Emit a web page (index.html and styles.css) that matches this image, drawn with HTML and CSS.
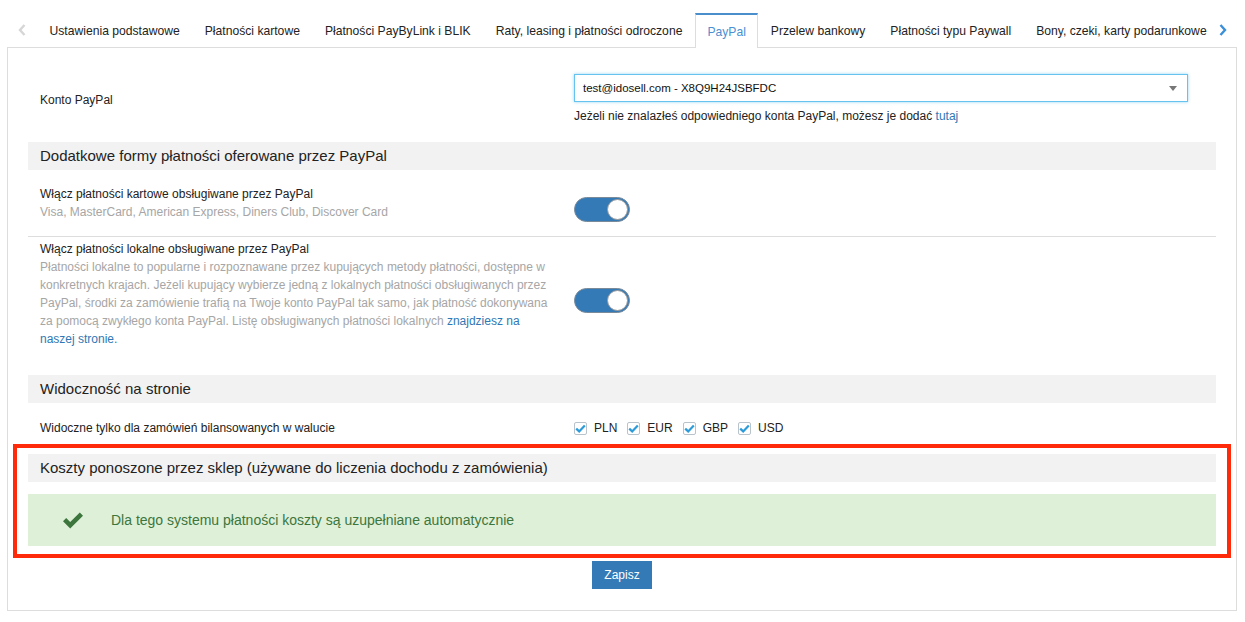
FILE: index.html
```html
<!DOCTYPE html>
<html lang="pl">
<head>
    <meta charset="UTF-8">
    <title>Płatności - PayPal</title>
    <link rel="stylesheet" href="styles.css">
</head>
<body>
    <!-- Zakładki -->
    <div class="tabs-bar">
        <span class="tab-arrow arrow-left">
            <svg width="8" height="12" viewBox="0 0 8 12"><path d="M6.5 1 L2 6 L6.5 11" fill="none" stroke="#d6d6d6" stroke-width="2.4"/></svg>
        </span>
        <ul class="tabs">
            <li>Ustawienia podstawowe</li>
            <li>Płatności kartowe</li>
            <li>Płatności PayByLink i BLIK</li>
            <li>Raty, leasing i płatności odroczone</li>
            <li class="active">PayPal</li>
            <li>Przelew bankowy</li>
            <li>Płatności typu Paywall</li>
            <li>Bony, czeki, karty podarunkowe</li>
        </ul>
        <span class="tab-arrow arrow-right">
            <svg width="8" height="12" viewBox="0 0 8 12"><path d="M1.5 1 L6 6 L1.5 11" fill="none" stroke="#3a8fd8" stroke-width="2.4"/></svg>
        </span>
    </div>

    <div class="panel">
        <!-- Konto -->
        <div class="form-row account-row">
            <div class="label-col">Konto PayPal</div>
            <div class="field-col">
                <div class="select">
                    <span>test@idosell.com - X8Q9H24JSBFDC</span>
                    <span class="caret"></span>
                </div>
                <div class="help">Jeżeli nie znalazłeś odpowiedniego konta PayPal, możesz je dodać <a href="#">tutaj</a></div>
            </div>
        </div>

        <!-- Dodatkowe formy -->
        <h3 class="section-head">Dodatkowe formy płatności oferowane przez PayPal</h3>
        <div class="form-row toggle-row first">
            <div class="label-col">
                <div class="title">Włącz płatności kartowe obsługiwane przez PayPal</div>
                <div class="desc">Visa, MasterCard, American Express, Diners Club, Discover Card</div>
            </div>
            <div class="field-col">
                <span class="switch"><span class="knob"></span></span>
            </div>
        </div>
        <div class="form-row toggle-row second">
            <div class="label-col">
                <div class="title">Włącz płatności lokalne obsługiwane przez PayPal</div>
                <div class="desc">Płatności lokalne to popularne i rozpoznawane przez kupujących metody płatności, dostępne w konkretnych krajach. Jeżeli kupujący wybierze jedną z lokalnych płatności obsługiwanych przez PayPal, środki za zamówienie trafią na Twoje konto PayPal tak samo, jak płatność dokonywana za pomocą zwykłego konta PayPal. Listę obsługiwanych płatności lokalnych <a href="#">znajdziesz na naszej stronie.</a></div>
            </div>
            <div class="field-col">
                <span class="switch"><span class="knob"></span></span>
            </div>
        </div>

        <!-- Widoczność -->
        <h3 class="section-head visibility-head">Widoczność na stronie</h3>
        <div class="form-row currency-row">
            <div class="label-col">Widoczne tylko dla zamówień bilansowanych w walucie</div>
            <div class="field-col checks">
                <label class="check"><span class="box"><svg width="11" height="9" viewBox="0 0 11 9"><path d="M1.2 4.6 L4.2 7.4 L9.8 1.4" fill="none" stroke="#2b9bd9" stroke-width="2.2"/></svg></span>PLN</label>
                <label class="check"><span class="box"><svg width="11" height="9" viewBox="0 0 11 9"><path d="M1.2 4.6 L4.2 7.4 L9.8 1.4" fill="none" stroke="#2b9bd9" stroke-width="2.2"/></svg></span>EUR</label>
                <label class="check"><span class="box"><svg width="11" height="9" viewBox="0 0 11 9"><path d="M1.2 4.6 L4.2 7.4 L9.8 1.4" fill="none" stroke="#2b9bd9" stroke-width="2.2"/></svg></span>GBP</label>
                <label class="check"><span class="box"><svg width="11" height="9" viewBox="0 0 11 9"><path d="M1.2 4.6 L4.2 7.4 L9.8 1.4" fill="none" stroke="#2b9bd9" stroke-width="2.2"/></svg></span>USD</label>
            </div>
        </div>

        <!-- Koszty (zaznaczone) -->
        <div class="highlight">
            <h3 class="section-head">Koszty ponoszone przez sklep (używane do liczenia dochodu z zamówienia)</h3>
            <div class="alert-success">
                <svg class="ok-icon" width="22" height="17" viewBox="0 0 22 17"><path d="M1 9.2 L4.2 6 L8.2 10 L17.8 0.6 L21 3.8 L8.2 16.4 Z" fill="#3c763d"/></svg>
                <span>Dla tego systemu płatności koszty są uzupełniane automatycznie</span>
            </div>
        </div>

        <div class="actions">
            <button class="btn-save">Zapisz</button>
        </div>
    </div>
</body>
</html>
```

FILE: styles.css
```css
body {
    margin: 0;
    font-family: "Liberation Sans", Arial, Helvetica, sans-serif;
    font-size: 12px;
    color: #222;
    background-color: #fff;
}
a {
    color: #2f78b5;
    text-decoration: none;
}

/* zakładki */
.tabs-bar {
    display: flex;
    align-items: stretch;
    height: 34px;
    margin: 13px 8px 0 7px;
    position: relative;
    z-index: 1;
}
.tab-arrow {
    display: flex;
    align-items: center;
}
.arrow-left {
    width: 30px;
    justify-content: center;
}
.arrow-right {
    flex: 1;
    justify-content: flex-start;
}
.tabs {
    display: flex;
    list-style: none;
    margin: 0;
    padding: 0;
}
.tabs li {
    height: 35px;
    line-height: 36px;
    padding: 0 12.5px;
    font-size: 12.15px;
    color: #222;
    white-space: nowrap;
    box-sizing: border-box;
}
.tabs li.active {
    color: #4a90d2;
    background-color: #fff;
    border: 1px solid #ddd;
    border-top: 2px solid #4a8fcc;
    border-bottom: none;
    padding: 0 11.5px;
    line-height: 34px;
}

/* panel */
.panel {
    width: 1230px;
    margin-left: 7px;
    box-sizing: border-box;
    border: 1px solid #ddd;
    padding: 26px 20px 21px;
}
.form-row {
    display: flex;
    align-items: center;
}
.label-col {
    width: 546px;
    box-sizing: border-box;
    padding: 0 20px 0 12px;
}
.field-col {
    flex: 1;
    padding-right: 28px;
}

/* konto */
.select {
    height: 28px;
    box-sizing: border-box;
    border: 1px solid #66c3ef;
    box-shadow: 0 0 3px rgba(102, 195, 239, 0.7);
    display: flex;
    align-items: center;
    justify-content: space-between;
    padding: 0 10px 0 8px;
    font-size: 11.5px;
    color: #111;
}
.caret {
    width: 0;
    height: 0;
    border-left: 4px solid transparent;
    border-right: 4px solid transparent;
    border-top: 5px solid #777;
}
.help {
    margin-top: 5px;
    line-height: 18px;
    color: #222;
}

/* sekcje */
.section-head {
    margin: 17px 0 0;
    height: 28px;
    line-height: 28px;
    padding: 0 12px;
    background-color: #f2f2f2;
    font-size: 15px;
    font-weight: normal;
    color: #222;
}
.toggle-row {
    line-height: 18px;
}
.toggle-row .field-col {
    display: flex;
    align-items: center;
}
.toggle-row.first {
    padding: 14px 0;
    border-bottom: 1px solid #ddd;
}
.toggle-row.second {
    padding: 3px 0 0;
}
.title {
    color: #222;
}
.desc {
    color: #a6a6a6;
}
.switch {
    display: block;
    position: relative;
    width: 56px;
    height: 25px;
    box-sizing: border-box;
    margin-top: 13px;
    border-radius: 13px;
    background-color: #337ab7;
    border: 1px solid #7a8a99;
}
.knob {
    position: absolute;
    right: 1px;
    top: 1px;
    width: 21px;
    height: 21px;
    box-sizing: border-box;
    border-radius: 50%;
    background-color: #fff;
    border: 1px solid #999;
}

/* waluty */
.visibility-head {
    margin-top: 27px;
}
.currency-row {
    padding: 18px 0 0;
    height: 14px;
}
.checks {
    display: flex;
    align-items: center;
}
.check {
    display: flex;
    align-items: center;
    margin-right: 10px;
    font-size: 12px;
}
.box {
    width: 13px;
    height: 13px;
    box-sizing: border-box;
    border: 1px solid #b9c3cb;
    border-radius: 2px;
    background-color: #fff;
    display: flex;
    align-items: center;
    justify-content: center;
    margin-right: 7px;
}

/* obszar kosztów */
.highlight {
    margin: 9px -15px 0;
    border: 4px solid #ff2a0a;
    padding: 6px 11px 8px;
}
.highlight .section-head {
    margin-top: 0;
}
.alert-success {
    margin-top: 12px;
    height: 52px;
    background-color: #dff0d8;
    color: #3c763d;
    font-size: 14px;
    display: flex;
    align-items: center;
}
.ok-icon {
    margin: 0 27px 0 34px;
}

/* przycisk */
.actions {
    text-align: center;
    margin-top: 3px;
}
.btn-save {
    background-color: #337ab7;
    color: #fff;
    border: none;
    font-family: "Liberation Sans", Arial, sans-serif;
    font-size: 12px;
    height: 28px;
    padding: 0 12px;
}
```
